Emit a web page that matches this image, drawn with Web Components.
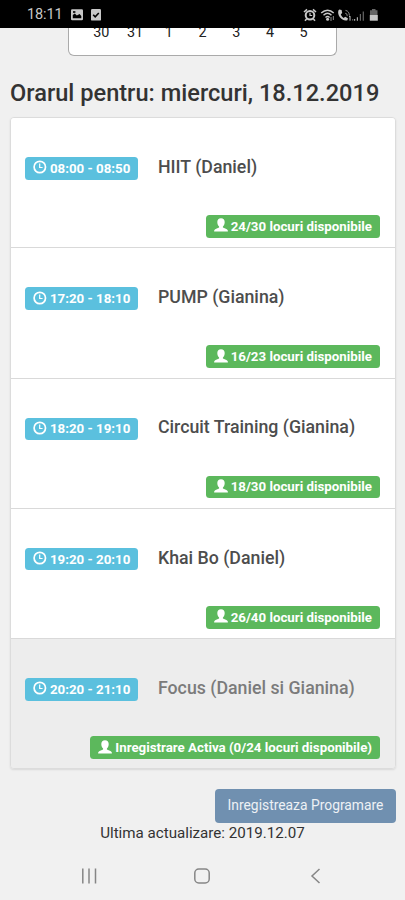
<!DOCTYPE html>
<html lang="ro">
<head>
<meta charset="utf-8">
<title>Orar</title>
<style>
html, body { margin: 0; height: 900px; overflow: hidden; background: #f0f0f0; font-family: Roboto, "Liberation Sans", sans-serif; color: #333; }
</style>
</head>
<body>
<gym-app></gym-app>
<script>
const define = (name, html) => {
  const t = document.createElement('template');
  t.innerHTML = html;
  customElements.define(name, class extends HTMLElement {
    constructor() {
      super();
      this.attachShadow({ mode: 'open' }).append(t.content.cloneNode(true));
    }
  });
};

define('status-bar', `
<style>
:host { display: flex; align-items: center; box-sizing: border-box; height: 28px; padding: 1px 26px 0 27px; background: #000; color: #c8c8c8; font-size: 14.5px; flex: none; position: relative; z-index: 1; }
.time { width: 36px; margin-right: 8px; white-space: nowrap; line-height: 18px; padding-top: 1px; letter-spacing: -.1px; }
svg { display: block; flex: none; }
.grow { flex: 1; }
</style>
<span class="time">18:11</span>
<svg width="12" height="12" viewBox="0 0 12 12"><rect y=".3" width="12" height="11" rx="1.2" fill="#c8c8c8"/><path d="M1.8 9.3V6l2-1.4 2 2L8.6 5l1.7 2v2.3z" fill="#000"/><rect x="2" y="2.2" width="2.4" height="1.6" fill="#000"/></svg>
<svg style="margin-left:8px" width="10" height="12" viewBox="0 0 10 12"><rect width="10" height="11.6" rx="1.2" fill="#c8c8c8"/><path d="M2.2 5.7l2 2.1L7.8 4" fill="none" stroke="#000" stroke-width="1.6"/></svg>
<span class="grow"></span>
<svg width="76" height="14" viewBox="0 0 76 14">
<g fill="none" stroke="#c8c8c8">
<circle cx="7" cy="7.2" r="4.3" stroke-width="2"/><path d="M1 4l3-2.7M13 4l-3-2.7M3.6 11l-1.6 1.8M10.4 11l1.6 1.8" stroke-width="1.6"/><path d="M7 4.8v2.7h2.2" stroke-width="1.2"/>
<path d="M18.2 5.1c4-3.9 8.8-3.9 12.5 0M20.5 7.3c2.6-2.6 5.4-2.6 8 0M22.5 9.4c1.4-1.3 2.7-1.3 4.1 0" stroke-width="1.4"/>
<path d="M42.2 5.2a2.5 2.5 0 0 1 2 3M42.5 2.4c2.7.4 4 2.7 3.8 5" stroke-width=".9" stroke="#999"/>
</g>
<circle cx="24.6" cy="11.2" r="1.5" fill="#c8c8c8"/><path d="M28 9v4M30.4 8v4" stroke="#777" stroke-width="1.2"/>
<path d="M36.3 1.5l2.3.6.6 3-1.4 1.2c.6 1.7 1.5 2.8 2.9 3.6l1.5-1.2 2.7 1.5-.5 2.1c-4.8 1.7-10.6-4.6-9-9.7z" fill="#c8c8c8"/>
<path d="M46 8.6l1-.6v4.7" stroke="#c8c8c8" fill="none"/>
<path d="M51.6 11v1.7M54.4 9.3v3.4" stroke="#aaa" stroke-width="1.2"/><path d="M57.4 6v6.7M60.3 3.5v9.2" stroke="#666" stroke-width="1.2"/><path d="M49.2 11.9h1" stroke="#aaa"/>
<path d="M67 2.2h2V1h3.5v1.2h2V7H67z" fill="#666"/><path d="M66.8 7h8v5.7h-8z" fill="#c8c8c8"/>
</svg>`);

define('calendar-tail', `
<style>
:host { display: grid; grid-template-columns: repeat(7, 1fr); box-sizing: border-box; width: 269px; height: 38px; margin: -10px 0 0 68px; padding: 7px 15.5px 0; background: #fff; border: 1px solid #aaa; border-top: 0; border-radius: 0 0 6px 6px; color: #222; font-size: 14.4px; line-height: 16px; text-align: center; flex: none; }
</style>
<span>30</span><span>31</span><span>1</span><span>2</span><span>3</span><span>4</span><span>5</span>`);

define('icon-badge', `
<style>
:host { display: inline-flex; align-items: center; box-sizing: border-box; height: 22.5px; padding: 0 8px; border-radius: 3.5px; background: #5bc0de; color: #fff; font-size: 13.3px; font-weight: 700; white-space: nowrap; }
:host([kind=seats]) { background: #5cb85c; }
svg { display: none; width: 14px; height: 14px; margin: -2px 3px 0 0; flex: none; }
.clock { margin-right: 2.6px; }
:host([kind=time]) .clock, :host([kind=seats]) .user { display: block; }
</style>
<svg class="clock" viewBox="0 0 14 14" fill="none" stroke="#fff"><circle cx="6.8" cy="7" r="5.7" stroke-width="1.7"/><path d="M6.7 3.5v4h2.9" stroke-width="1.2"/></svg>
<svg class="user" viewBox="0 0 14 14" fill="#fff"><path d="M7 .3c2.3 0 3.7 1.6 3.7 3.7 0 2-.8 3.6-1.8 4.6v1l3.5 1.3c1 .4 1.5 1.2 1.5 2.5H.1c0-1.3.5-2.1 1.5-2.5l3.5-1.3v-1C4.1 7.6 3.3 6 3.3 4 3.3 1.9 4.7.3 7 .3z"/></svg>
<slot></slot>`);

define('class-row', `
<style>
:host { display: flex; flex-direction: column; justify-content: space-between; box-sizing: border-box; height: 130.3px; padding: 39px 15px 9.7px 14.3px; background: #fff; border-bottom: 1px solid #d9d9d9; }
:host([active]) { background: #ededed; border-bottom: 0; padding-bottom: 10.7px; }
.top { display: flex; align-items: flex-start; }
.title { margin: -.4px 0 0 19.7px; font-size: 17.75px; line-height: 21px; font-weight: 500; color: #4d4d4d; white-space: nowrap; }
:host([active]) .title { color: #7b7b7b; }
.bottom { display: flex; justify-content: flex-end; }
</style>
<div class="top"><icon-badge kind="time"><slot name="time"></slot></icon-badge><div class="title"><slot></slot></div></div>
<div class="bottom"><icon-badge kind="seats"><slot name="seats"></slot></icon-badge></div>`);

define('class-list', `
<style>
:host { display: block; box-sizing: border-box; height: 652px; margin: 0 9px 0 10px; border: 1px solid #dcdcdc; border-radius: 4px; overflow: hidden; box-shadow: 0 1px 2px rgba(0,0,0,.1); flex: none; }
</style><slot></slot>`);

define('save-button', `
<style>
:host { display: block; align-self: flex-end; margin: 20px 9px 0 0; flex: none; }
button { display: block; box-sizing: border-box; width: 181px; height: 33.5px; padding: 0; border: 0; border-radius: 4px; background: #7090b0; color: #edf1f5; font: 400 13.85px/33px Roboto, sans-serif; white-space: nowrap; }
</style><button><slot></slot></button>`);

define('nav-bar', `
<style>
:host { display: flex; align-items: center; justify-content: space-between; box-sizing: border-box; height: 50px; padding: 1px 80px 0 79px; background: #f1f1f1; flex: none; }
svg { display: block; fill: none; stroke: #868686; stroke-width: 1.5; }
</style>
<svg width="20" height="20"><path d="M3.8 2.5v15M10 2.5v15M16.5 2.5v15"/></svg>
<svg width="20" height="20"><rect x="2.8" y="3" width="14.4" height="14" rx="4"/></svg>
<svg width="20" height="20"><path d="M14.5 3L7 10l7.5 7"/></svg>`);

define('gym-app', `
<style>
:host { display: flex; flex-direction: column; width: 405px; height: 900px; background: #f0f0f0; }
h1 { margin: 22px 0 9px 10px; height: 30px; font-size: 23.6px; line-height: 30px; font-weight: 500; white-space: nowrap; flex: none; }
.updated { text-align: center; font-size: 15.15px; line-height: 20px; height: 27px; flex: 1; white-space: nowrap; }
</style>
<status-bar></status-bar>
<calendar-tail></calendar-tail>
<h1>Orarul pentru: miercuri, 18.12.2019</h1>
<class-list>
<class-row><span slot="time">08:00 - 08:50</span>HIIT (Daniel)<span slot="seats">24/30 locuri disponibile</span></class-row>
<class-row><span slot="time">17:20 - 18:10</span>PUMP (Gianina)<span slot="seats">16/23 locuri disponibile</span></class-row>
<class-row><span slot="time">18:20 - 19:10</span>Circuit Training (Gianina)<span slot="seats">18/30 locuri disponibile</span></class-row>
<class-row><span slot="time">19:20 - 20:10</span>Khai Bo (Daniel)<span slot="seats">26/40 locuri disponibile</span></class-row>
<class-row active><span slot="time">20:20 - 21:10</span>Focus (Daniel si Gianina)<span slot="seats">Inregistrare Activa (0/24 locuri disponibile)</span></class-row>
</class-list>
<save-button>Inregistreaza Programare</save-button>
<div class="updated">Ultima actualizare: 2019.12.07</div>
<nav-bar></nav-bar>`);
</script>
</body>
</html>
